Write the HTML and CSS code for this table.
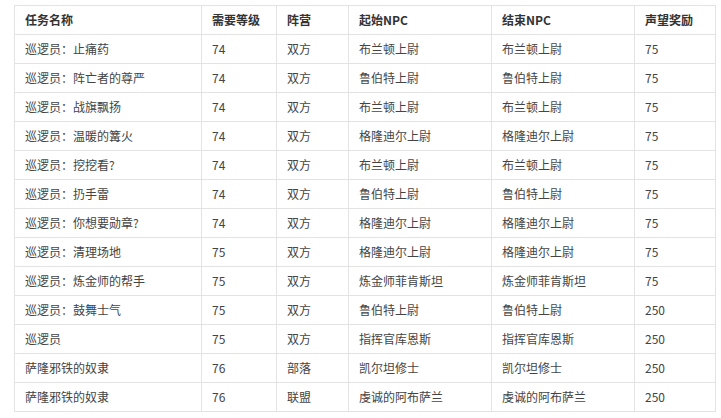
FILE: index.html
```html
<!DOCTYPE html>
<html lang="zh-CN">
<head>
<meta charset="utf-8">
<link rel="stylesheet" href="styles.css">
</head>
<body>
<table class="quests">
  <colgroup>
    <col class="c-name"><col class="c-lvl"><col class="c-side"><col class="c-npc"><col class="c-npc"><col class="c-rep">
  </colgroup>
  <thead>
    <tr><th>任务名称</th><th>需要等级</th><th>阵营</th><th>起始NPC</th><th>结束NPC</th><th>声望奖励</th></tr>
  </thead>
  <tbody>
    <tr><td>巡逻员：止痛药</td><td>74</td><td>双方</td><td>布兰顿上尉</td><td>布兰顿上尉</td><td>75</td></tr>
    <tr><td>巡逻员：阵亡者的尊严</td><td>74</td><td>双方</td><td>鲁伯特上尉</td><td>鲁伯特上尉</td><td>75</td></tr>
    <tr><td>巡逻员：战旗飘扬</td><td>74</td><td>双方</td><td>布兰顿上尉</td><td>布兰顿上尉</td><td>75</td></tr>
    <tr><td>巡逻员：温暖的篝火</td><td>74</td><td>双方</td><td>格隆迪尔上尉</td><td>格隆迪尔上尉</td><td>75</td></tr>
    <tr><td>巡逻员：挖挖看?</td><td>74</td><td>双方</td><td>布兰顿上尉</td><td>布兰顿上尉</td><td>75</td></tr>
    <tr><td>巡逻员：扔手雷</td><td>74</td><td>双方</td><td>鲁伯特上尉</td><td>鲁伯特上尉</td><td>75</td></tr>
    <tr><td>巡逻员：你想要勋章?</td><td>74</td><td>双方</td><td>格隆迪尔上尉</td><td>格隆迪尔上尉</td><td>75</td></tr>
    <tr><td>巡逻员：清理场地</td><td>75</td><td>双方</td><td>格隆迪尔上尉</td><td>格隆迪尔上尉</td><td>75</td></tr>
    <tr><td>巡逻员：炼金师的帮手</td><td>75</td><td>双方</td><td>炼金师菲肯斯坦</td><td>炼金师菲肯斯坦</td><td>75</td></tr>
    <tr><td>巡逻员：鼓舞士气</td><td>75</td><td>双方</td><td>鲁伯特上尉</td><td>鲁伯特上尉</td><td>250</td></tr>
    <tr><td>巡逻员</td><td>75</td><td>双方</td><td>指挥官库恩斯</td><td>指挥官库恩斯</td><td>250</td></tr>
    <tr><td>萨隆邪铁的奴隶</td><td>76</td><td>部落</td><td>凯尔坦修士</td><td>凯尔坦修士</td><td>250</td></tr>
    <tr><td>萨隆邪铁的奴隶</td><td>76</td><td>联盟</td><td>虔诚的阿布萨兰</td><td>虔诚的阿布萨兰</td><td>250</td></tr>
  </tbody>
</table>
</body>
</html>
```
FILE: styles.css
```css
html, body {
  margin: 0;
  padding: 0;
  background: #ffffff;
}
body {
  padding: 5px 0 0 14px;
  font-family: "Microsoft YaHei", "Noto Sans CJK SC", "Noto Sans", sans-serif;
  font-size: 12px;
  color: #333333;
}
.quests {
  border-collapse: collapse;
  table-layout: fixed;
  width: 701px;
}
.c-name { width: 187px; }
.c-lvl { width: 75px; }
.c-side { width: 72px; }
.c-npc { width: 143px; }
.c-rep { width: 81px; }
.quests th,
.quests td {
  border: 1px solid #e3e3e3;
  height: 29px;
  padding: 0 0 0 10px;
  text-align: left;
  vertical-align: middle;
  white-space: nowrap;
  line-height: 16px;
  box-sizing: border-box;
}
.quests th {
  font-weight: bold;
  color: #333333;
}
.quests td {
  color: #444444;
}
```
